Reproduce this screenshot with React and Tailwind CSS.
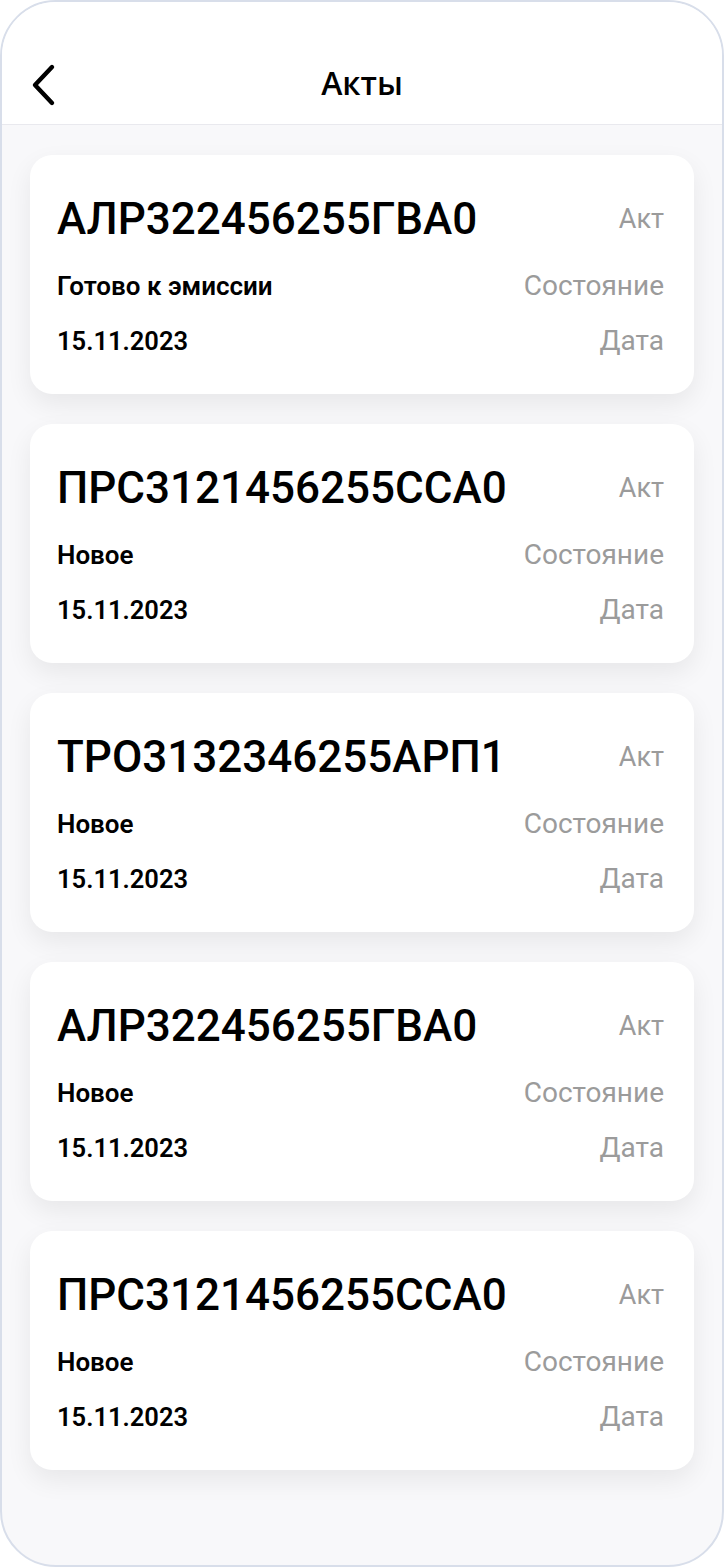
import React from "react";

const acts = [
  { code: "АЛР322456255ГВА0", state: "Готово к эмиссии", date: "15.11.2023" },
  { code: "ПРС3121456255ССА0", state: "Новое", date: "15.11.2023" },
  { code: "ТРО3132346255АРП1", state: "Новое", date: "15.11.2023" },
  { code: "АЛР322456255ГВА0", state: "Новое", date: "15.11.2023" },
  { code: "ПРС3121456255ССА0", state: "Новое", date: "15.11.2023" },
];

const ActCard = ({ act }) => {
  return (
    <div className="h-[239px] rounded-[22px] bg-white shadow-[0_10px_26px_rgba(0,0,0,0.07)] pl-[27px] pr-[30px] pt-[38px] flex flex-col">
      <div className="flex items-center justify-between h-[52px]">
        <span className="text-[44px] font-medium text-black">{act.code}</span>
        <span className="text-[27px] text-[#9b9b9b]">Акт</span>
      </div>
      <div className="flex items-center justify-between h-[30px] mt-[26px]">
        <span className="text-[26px] font-semibold text-black">{act.state}</span>
        <span className="text-[28px] text-[#9b9b9b]">Состояние</span>
      </div>
      <div className="flex items-center justify-between h-[30px] mt-[25px]">
        <span className="text-[25.5px] font-semibold text-black">{act.date}</span>
        <span className="text-[28px] text-[#9b9b9b]">Дата</span>
      </div>
    </div>
  );
};

const App = () => {
  return (
    <div
      className="h-[1567px] w-full bg-white"
      style={{ fontFamily: "Roboto, 'Noto Sans', sans-serif" }}
    >
      <div className="h-full rounded-[56px] border-2 border-[#d8deea] overflow-hidden bg-[#f8f8fa] flex flex-col">
        <header className="h-[123px] shrink-0 bg-white border-b border-[#e9e9ee] relative flex items-center justify-center pt-[40px]">
          <button className="absolute left-[24px] top-[60px] w-[34px] h-[46px] flex items-center justify-center">
            <svg width="28" height="44" viewBox="0 0 28 44" fill="none">
              <path
                d="M23 4 L6 22 L23 40"
                stroke="#000"
                strokeWidth="4.4"
                strokeLinecap="round"
                strokeLinejoin="round"
              />
            </svg>
          </button>
          <h1
            className="text-[32px] font-semibold text-black leading-none"
            style={{ fontFamily: "'Open Sans', sans-serif" }}
          >
            Акты
          </h1>
        </header>
        <main className="flex flex-col gap-[30px] px-[28px] pt-[30px]">
          {acts.map((act, i) => (
            <ActCard key={i} act={act} />
          ))}
        </main>
      </div>
    </div>
  );
};

export default App;
